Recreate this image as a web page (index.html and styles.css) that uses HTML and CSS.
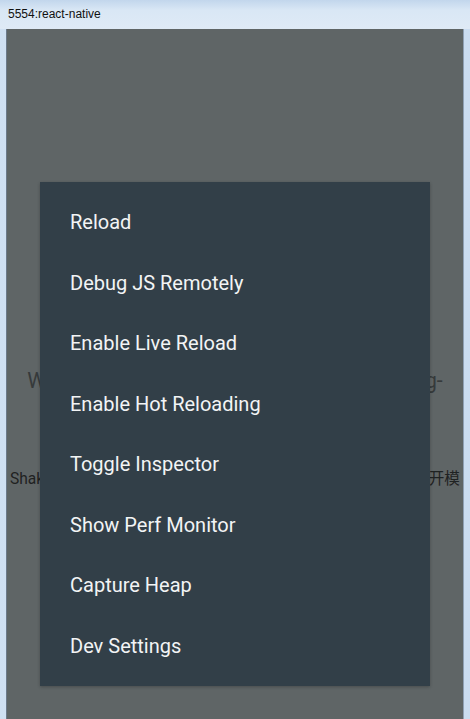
FILE: index.html
```html
<!DOCTYPE html>
<html>
<head>
<meta charset="utf-8">
<link rel="stylesheet" href="styles.css">
</head>
<body>
<div class="window">
  <div class="titlebar"><span class="title">5554:react-native</span></div>
  <div class="frame">
    <div class="screen">
      <div class="bg-content">
        <div class="welcome">Welcome to React Native, Hello World Gang-</div>
        <div class="hint">Shake or press menu button for dev menu, 双击R重新加载 打开模</div>
      </div>
      <div class="dialog">
        <div class="item">Reload</div>
        <div class="item">Debug JS Remotely</div>
        <div class="item">Enable Live Reload</div>
        <div class="item">Enable Hot Reloading</div>
        <div class="item">Toggle Inspector</div>
        <div class="item">Show Perf Monitor</div>
        <div class="item">Capture Heap</div>
        <div class="item">Dev Settings</div>
      </div>
    </div>
  </div>
</div>
</body>
</html>
```
FILE: styles.css
```css
html, body {
  margin: 0;
  padding: 0;
}
body {
  width: 470px;
  height: 719px;
  overflow: hidden;
  background: #d6e4f2;
  font-family: "Liberation Sans", Arial, sans-serif;
}
.window {
  width: 470px;
  height: 719px;
  display: flex;
  flex-direction: column;
  background: linear-gradient(90deg, #cfe0f2 0%, #dfeaf6 40%, #d3e3f3 70%, #cadcf0 100%);
}
.titlebar {
  height: 29px;
  display: flex;
  align-items: center;
  padding-left: 8px;
  box-sizing: border-box;
  background: linear-gradient(180deg, #c2d6ec 0%, #d9e7f5 35%, #dfeaf6 100%);
}
.title {
  font-size: 12px;
  color: #111;
  margin-top: -1px;
}
.frame {
  flex: 1;
  display: flex;
  padding: 0 6px 0 6px;
}
.screen {
  flex: 1;
  position: relative;
  background: #5f6566;
  border-left: 1px solid #6c7a8a;
  border-right: 1px solid #8fa0b4;
  overflow: hidden;
}
.bg-content {
  display: flex;
  flex-direction: column;
  align-items: center;
  padding-top: 337px;
}
.welcome {
  font-family: Roboto, "Noto Sans CJK SC", sans-serif;
  font-size: 21.2px;
  color: #363a3b;
  white-space: nowrap;
  height: 30px;
  line-height: 30px;
}
.hint {
  margin-top: 70px;
  font-family: Roboto, "Noto Sans CJK SC", sans-serif;
  font-size: 15.6px;
  color: #1f2222;
  white-space: nowrap;
}
.dialog {
  position: absolute;
  left: 33px;
  top: 153px;
  width: 390px;
  height: 504px;
  box-sizing: border-box;
  padding: 10px 0;
  background: #323f48;
  box-shadow: 0 1px 3px rgba(0,0,0,0.25);
  display: flex;
  flex-direction: column;
}
.item {
  height: 60.5px;
  display: flex;
  align-items: center;
  padding-left: 30px;
  font-family: Roboto, sans-serif;
  font-size: 20px;
  color: #f2f4f5;
}
```
